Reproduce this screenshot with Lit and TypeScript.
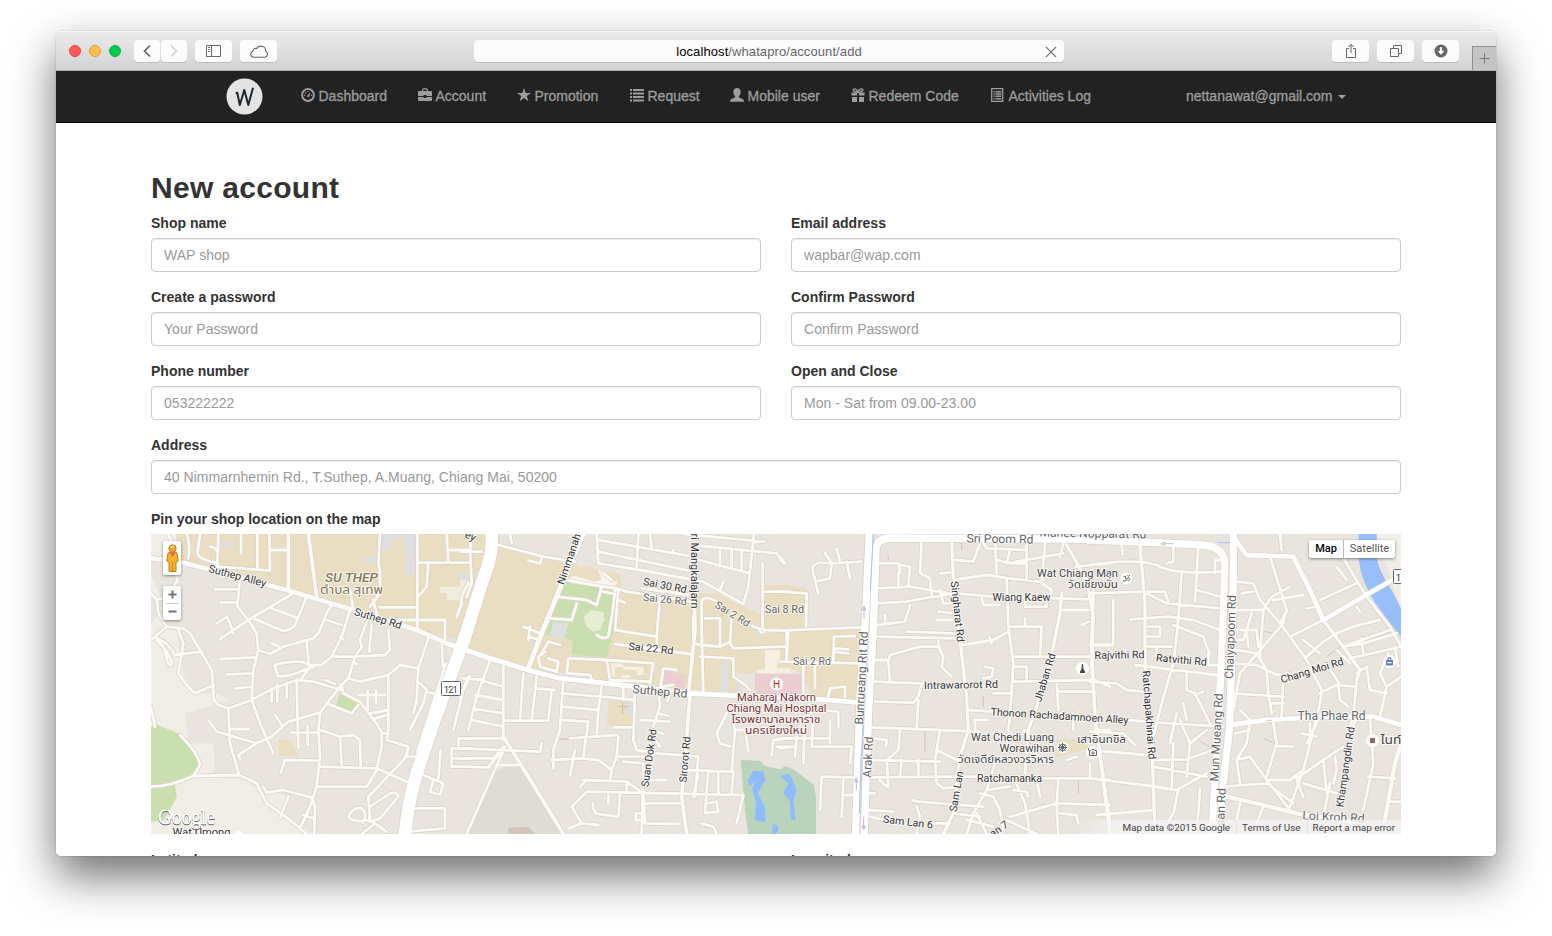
import { LitElement, html, svg, css } from "lit";
import { customElement } from "lit/decorators.js";

type Road = { d: string; w: number };
type Tile = { x: number; roads: Road[] };

// Street geometry, in thirds of a pixel, one sheet per quarter of the map.
const TILES: Tile[] = [
  {
    x: 140,
    roads: [
      {
        w: 8.5,
        d: `M85 12 L105 75 112 150 75 220 M140 12 C150 40 150 60 145 85 M180 12 L172 70 Q180 90 235 100 L225 110 M235 12 L232 100 M210 50 Q220 50 235 65 M303 12 V70
M352 12 V118 M235 110 L390 122 388 12 M390 60 H440 M445 12 V180 M720 12 L715 100 720 120 V190 L690 230 M630 180 L640 240 M832 12 V300 M832 98 H985 M920 12 L925 90 M925 60 H990 M865 100 L860 170 835 200
M720 232 H830 M720 270 H915 V335 M985 160 Q960 200 965 220 L950 262 M300 140 L292 230 325 270 350 310 355 360 340 420 335 510 M225 178 H290 M240 217 H290 M230 280 L262 260 280 310 M325 270 L240 327
M325 270 L460 190 M340 265 L430 303 Q455 300 465 285 L500 200 M395 235 L475 265 M355 360 L390 372 430 350 520 325 535 310 560 250 575 225 M395 340 L420 352 M560 270 L605 285 M630 240 L605 320 575 380 M600 320 L610 328
M500 335 L507 410 M240 387 L350 382 M260 433 L340 430 M285 475 L335 470 M515 405 L545 405 575 380 645 380 735 375 750 360 745 300 M680 275 L660 330 665 350 645 380 625 445 605 465 M695 280 L688 365 M700 210 L712 260
M485 395 Q430 395 403 406 L415 440 455 435 520 410 485 395 M485 445 L515 405 M335 510 L400 475 470 450 520 455 605 480 M555 450 L585 462 M625 445 L660 455 745 435 780 405 835 415 865 325 M640 395 L650 402
M745 435 V600 L740 630 805 650 800 680 840 680 M605 465 L610 490 660 515 712 585 725 605 725 650 710 720 M605 465 L560 520 540 550 535 600 540 680 530 770 510 830 M560 520 L635 550 655 525
M655 495 H735 M683 480 V540 M708 480 V520 M690 550 L745 540 M705 565 L740 555 M725 610 H745 M835 415 L830 510 820 550 M840 460 L860 480 850 520 810 600 M865 487 L880 490 M905 330 L908 410 M832 665 L885 500 918 400
M395 480 V515 M412 465 V515 M440 460 V505 M470 455 L475 655 M455 608 H535 M503 588 V645 M235 525 L265 535 335 510 M265 535 L270 640 297 735 M270 597 H325 M205 570 L230 605 350 640 395 620 445 575 540 548
M350 640 L295 675 300 688 M335 510 L360 580 400 670 M405 555 L425 585 M80 290 L130 295 150 310 215 420 222 510 235 525 M50 205 L55 250 80 290 33 330 M33 190 L50 208 70 205 M115 300 L130 340 115 430 Q150 480 165 490 L222 465
M50 330 Q90 370 97 402 Q85 420 75 360 Q65 335 50 330 M50 325 Q85 335 105 375 L185 365 M33 770 Q90 770 160 738 L297 735 350 760 380 820 450 870 500 912 M120 615 Q175 670 180 705 L160 738 M33 530 L45 590
M370 770 L380 788 430 780 515 803 525 830 522 912 M445 800 L420 865 M510 830 L480 895 M490 855 L520 865 M422 728 L435 690 530 692 M540 710 L710 715 800 755 M535 770 H680 L710 720 M540 600 L600 620 605 705 M595 620 L640 615 660 630 662 710
M805 650 L795 685 685 800 690 870 740 905 M690 830 L750 790 Q775 785 775 800 L720 865 690 875 M690 870 Q640 880 625 860 Q640 830 665 835 Q685 850 668 878 M665 912 L700 885 M990 440 L970 480 940 600 M902 660 L895 745 M850 735 L910 760 900 795 870 785 880 750
M815 835 H915 V895 L800 905 M990 625 H955 V650 M990 655 H935 V710 H990 M935 685 H990`,
      },
      { w: 11, d: `M505 12 L530 200 M445 12 V180` },
      { w: 14, d: `M33 85 L120 95 440 180 640 240 830 300 920 340` },
    ],
  },
  {
    x: 460,
    roads: [
      {
        w: 8.5,
        d: `M150 12 L155 40 M115 45 L250 80 345 95 M205 92 L240 100 245 85 M0 65 H65 M35 12 L30 60 35 160 20 200 M410 12 L415 100 540 120 730 155 850 222 865 170 882 12 M415 30 L700 80 M415 65 L700 125 M535 12 L530 115 M570 12 L575 55
M640 60 V70 M670 12 L915 35 M700 45 L950 70 970 100 M700 85 L870 130 M780 55 V110 M815 55 V115 M845 60 V120 M790 155 L780 180 M320 150 L400 165 470 175 500 185 695 215 M545 175 L690 195
M430 130 L455 150 M425 170 L410 225 380 210 290 200 M350 220 L335 270 275 265 M430 185 L455 190 M465 180 Q460 250 445 320 Q430 330 410 315 M475 180 L465 300 590 320 600 200 M475 210 L495 218 M590 320 V350 M465 342 L690 372
M190 290 L240 310 M205 320 L240 330 M210 290 L205 330 M245 370 L265 335 300 345 M265 385 L295 395 290 425 240 410 235 380 255 365 M320 430 L325 385 440 390 580 400 570 460 M440 390 L450 450 570 455 M325 430 L390 435 395 450
M600 480 L610 415 650 420 M610 470 L640 465 M595 480 L600 530 580 590 M540 570 L630 575 M595 550 L625 558 M630 490 L622 515 M730 490 L725 300 725 210 Q740 195 770 215 M735 265 H780 V350 M700 340 L725 345 780 350 810 335 M720 380 L820 385 V440
M815 250 L810 340 820 355 975 350 M908 100 V300 M915 185 H990 M870 285 L905 300 990 302 M980 310 V390 M820 440 L850 460 870 480 M10 445 L70 450 M130 410 V630 M90 390 L50 500 25 600 M25 440 L0 500 M60 450 L130 470 M45 495 L130 510
M40 535 L130 550 M35 570 L130 590 M190 430 L180 570 M130 572 H265 L275 480 M230 440 L215 570 M225 475 L285 480 M0 625 H130 M0 655 L240 665 245 640 M0 685 H100 L130 650 M0 710 L85 712 130 655
M135 650 L20 912 M115 705 H185 M310 450 L300 600 280 660 280 715 M275 690 L360 685 415 690 455 720 470 680 475 620 M305 490 L425 500 M305 530 L415 540 M300 570 L385 575 M425 470 L415 540 410 620 M385 575 L370 680
M345 660 L330 735 M330 625 L470 615 M430 500 L525 510 M490 470 V510 M525 480 L520 630 530 660 590 670 715 680 705 800 M455 720 L450 755 M470 680 L560 680 M490 695 L550 700 M460 592 H515 M370 750 L500 755 550 790
M500 755 V785 M380 785 L850 795 830 880 M380 785 L335 830 365 880 325 895 M365 880 L415 885 M360 770 L380 750 M550 700 L545 912 M550 780 L555 880 660 882 M400 820 Q395 850 420 853 L475 860 480 795 M445 795 V820
M527 850 H550 V870 H527 Z M550 820 H660 M580 620 L600 650 M575 600 L610 612 M560 750 H620 M680 720 L815 725 825 600 820 580 M715 735 L700 800 M745 725 L740 780 M775 730 V790 M740 780 L735 850 775 845 770 815 740 820
M820 725 L815 790 M725 880 L760 890 770 912 M800 550 L770 610 780 640 810 650 M830 600 H855 L865 665 M990 625 L940 630 935 675 M950 650 H990 M700 260 V330`,
      },
      { w: 11, d: `M130 620 L205 740 310 912 M700 80 L705 300 685 495 690 500 665 800 680 912` },
      { w: 15, d: `M370 12 L310 150 245 310 205 415` },
    ],
  },
  {
    x: 780,
    roads: [
      {
        w: 8.5,
        d: `M0 80 L15 100 M135 70 L155 100 245 95 M155 100 L115 98 97 110 100 130 115 190 M105 155 L150 145 155 100 M170 55 L180 95 M200 95 L210 145 M0 185 L80 190 78 290 M0 302 L240 292 M25 305 L20 385 M0 395 L240 400 M160 395 L162 320 225 318
M165 355 L205 358 M160 365 L205 370 M105 400 V475 M70 390 V490 M145 500 L150 475 195 470 195 500 M120 540 L175 545 175 590 M0 625 H145 M150 570 V640 M50 620 L45 680 M75 560 L70 700 M100 560 L95 650 H215 L210 700 M0 655 L45 650
M120 840 L125 740 225 742 M190 745 L185 860 M190 795 H225 M290 100 L355 100 360 130 M355 130 V175 M290 175 L390 170 505 190 M290 220 L380 215 430 205 530 190 640 200 840 205 930 208 M425 30 L420 130 450 145 455 200 M360 105 L390 110 385 165
M315 255 V280 M290 285 L375 275 390 225 M380 305 L520 310 M290 320 L530 325 M475 325 L475 350 490 380 485 410 515 440 M325 395 L330 375 420 350 480 350 M290 390 L325 390 330 455 M285 455 L420 460 565 470 M550 345 L640 330 685 305 M628 320 L635 340
M520 150 L620 135 685 145 780 155 815 180 810 205 M645 35 L650 130 M600 40 L580 95 525 90 M680 100 L850 70 M740 40 V150 M795 40 L785 155 M850 40 L840 80 M610 40 L620 55 735 60 M690 60 L680 100 M650 90 L690 100 740 100 M680 150 L685 290 700 400 690 560 680 640
M690 290 L785 290 780 380 M735 265 V290 M700 380 H990 M700 410 H740 V450 M700 455 L940 450 M850 240 H925 M940 345 H990 M905 285 L925 275 M885 110 L990 100 M480 130 L510 128 M480 180 L490 220 530 220 M475 245 L530 250 M470 270 L520 270
M605 205 L610 225 660 225 M735 210 V230 H800 V210 M565 540 L640 545 M580 570 L625 570 M585 570 V600 M285 515 L400 518 415 500 425 465 M415 510 L410 600 M275 592 L480 600 600 605 M285 625 L320 630 318 650 M360 600 L355 660 320 690 325 770
M270 690 L480 695 M480 600 L465 690 M365 690 L360 740 M415 690 V740 M270 742 L500 740 H590 M590 740 L800 745 930 745 990 750 M300 750 L320 770 M465 690 L470 760 490 775 540 770 M470 660 L530 690 M640 490 H695 M615 410 L640 415 635 440 610 445
M830 450 L835 540 M835 485 H940 M880 550 V600 M645 700 L620 780 580 850 560 912 M700 740 L735 820 750 912 M600 790 L640 800 660 840 670 900 M620 780 L690 770 M700 780 L740 785 745 800 M520 850 L600 860 M395 810 L415 815 610 830 M410 830 L420 860 410 912
M460 880 H510 M265 840 L340 845 M270 860 L310 870 M270 790 H285 M835 750 L830 830 835 912 M690 860 L830 820 990 825 M770 750 L780 800 M840 850 L890 855 895 880 M930 700 V740 M860 690 L890 680 M945 450 L990 470 M945 600 H990 M735 600 L700 640
M560 870 L640 890 M590 850 L620 912 M680 870 L770 912`,
      },
      {
        w: 10,
        d: `M515 30 L520 150 540 330 560 500 565 600 540 680 520 850 490 912 M845 190 L840 250 820 350 810 400 780 500 745 600 735 730 M860 45 L920 150 940 260 935 400 945 560 970 740 990 880`,
      },
    ],
  },
  {
    x: 1090,
    roads: [
      {
        w: 8.5,
        d: `M95 45 L98 75 M0 105 Q130 85 200 105 Q250 135 390 125 M250 45 L250 95 230 100 M325 50 L315 215 M0 190 L160 185 230 220 395 235 M120 268 L235 260 310 270 390 300 M165 185 L225 185 235 215 M275 130 L262 300 250 400 215 520
M250 285 L340 320 350 350 360 370 M70 210 V345 M0 345 H70 M175 290 H210 V320 H175 M175 350 H245 M200 350 V380 M135 405 L380 435 M290 430 L290 480 315 490 360 580 M325 490 L340 485 M0 455 L80 460 110 480 160 485 M280 520 L290 570 M260 550 L240 640
M110 570 L240 580 400 590 M0 605 L100 610 135 645 M0 660 L170 675 M190 690 L290 688 370 660 M190 710 L350 740 M0 745 L160 765 260 780 350 730 M300 640 L290 740 M265 780 L250 850 220 900 M250 640 L245 780 M195 840 L20 855 M330 775 L320 912
M375 90 H395 M375 90 V130 M320 180 L390 200 M215 520 L190 620 M355 370 V405 H380 M270 570 L300 640 350 600
M440 155 L490 160 510 210 570 280 600 320 650 390 695 480 690 520 640 720 600 830 M440 240 L520 240 510 380 M485 250 L460 330 440 330 M440 300 L500 300 505 350 M470 310 L475 350 M520 240 L545 200 600 170 M580 280 L450 430 430 540 M455 190 L490 185
M570 12 L575 60 M540 80 L590 240 575 290 M550 210 L640 195 M690 210 L800 160 M760 85 L830 200 900 290 933 350 M650 235 L680 230 M600 320 L700 270 M800 230 L810 245 M770 150 L740 110 M430 400 L500 405 560 435 600 430 M440 360 L500 370 530 420 535 490 545 550
M425 490 L580 500 M580 440 L575 560 M540 520 H580 M640 330 L690 370 M650 380 L700 335 740 310 790 290 870 270 M740 360 L780 400 M760 350 L820 340 920 310 M815 325 L820 370 M760 350 L900 300 M780 385 L933 350 M800 430 L830 410 840 480 890 490
M800 450 L790 560 780 590 M745 470 L750 510 775 530 M690 490 L740 465 800 470 M895 370 L870 430 890 470 870 560 M933 440 L890 470 M915 350 L925 410 M710 400 L750 465 M450 540 L480 570 470 640 440 690 450 760 M435 610 L480 600
M440 690 L480 680 530 750 600 750 640 720 M400 770 L530 760 610 820 M530 750 L600 840 M550 580 L560 640 530 740 M560 648 L610 650 M635 610 L680 620 M660 580 V640 M620 745 L700 690 760 650 M700 690 L710 790 M640 760 L740 790 M735 680 L740 720 730 760
M620 750 L640 800 M840 570 L850 700 820 840 M835 740 L915 745 M780 620 L800 560 M900 815 H933 M590 240 L570 280 M650 640 L690 560 M720 760 L700 860 M450 820 L440 870 M520 830 L500 880`,
      },
      { w: 10, d: `M150 50 L165 220 165 390 185 620 195 912 M10 180 L5 350 15 560 40 760 60 912 M700 270 L760 350 810 420 800 450` },
      { w: 13, d: `M430 20 L470 75 610 80 660 180 700 270 820 200 933 135 M420 585 L530 570 700 560 850 560 933 585 M410 800 L520 825 620 850 700 862 820 880 M933 640 L915 700 885 870` },
    ],
  },
];

type Lbl = { t: string; x: number; y: number; w: number; r?: number; s?: number; c?: string; b?: string };
const DK = "#333";
const MID = "#666";
const WINE = "#7d3233";
// x, y: centre of the label; w: its set width; r: rotation in degrees
const LABELS: Lbl[] = [
  { t: "Suthep Alley", x: 237.5, y: 576, w: 59, r: 15 },
  { t: "Suthep Rd", x: 378, y: 618.5, w: 49, r: 17 },
  { t: "SU THEP", x: 351.5, y: 578, w: 53, s: 12, c: "#85775a", b: "it" },
  { t: "ตำบล สุเทพ", x: 351.5, y: 590, w: 63, s: 11.5, c: "#85775a" },
  { t: "Wat Umong", x: 201.5, y: 832.5, w: 58, s: 11 },
  { t: "ey", x: 470.5, y: 536, w: 11, r: 25 },
  { t: "Nimmanah", x: 569, y: 559, w: 53, r: -71 },
  { t: "ri Mangkalajarn", x: 694, y: 571, w: 75, r: 90 },
  { t: "Sai 30 Rd", x: 665, y: 585.5, w: 44, r: 11 },
  { t: "Sai 26 Rd", x: 665, y: 599.5, w: 44, r: 6, c: MID },
  { t: "Sai 22 Rd", x: 651, y: 648.5, w: 45, r: 6 },
  { t: "Sai 2 Rd", x: 732.5, y: 614, w: 39, r: 32, c: MID },
  { t: "Sai 8 Rd", x: 784.5, y: 609, w: 39, c: MID },
  { t: "Sai 2 Rd", x: 812, y: 661.5, w: 38, c: MID },
  { t: "Suthep Rd", x: 660, y: 691.5, w: 55, r: 5, s: 12, c: MID },
  { t: "Suan Dok Rd", x: 649, y: 758, w: 58, r: -82 },
  { t: "Sirorot Rd", x: 685, y: 759.5, w: 46, r: -85 },
  { t: "Maharaj Nakorn", x: 776.5, y: 697, w: 79, s: 11, c: WINE },
  { t: "Chiang Mai Hospital", x: 776.5, y: 708, w: 100, s: 11, c: WINE },
  { t: "โรงพยาบาลมหาราช", x: 776, y: 719, w: 89, s: 11, c: WINE },
  { t: "นครเชียงใหม่", x: 776, y: 730, w: 62, s: 11, c: WINE },
  { t: "Bunrueang Rit Rd", x: 861.5, y: 678, w: 93, r: -87, s: 12, c: MID },
  { t: "Arak Rd", x: 868, y: 757, w: 41, r: -87, s: 12, c: MID },
  { t: "Sri Poom Rd", x: 1000, y: 539, w: 67, r: 1, s: 12, c: MID },
  { t: "Manee Nopparat Rd", x: 1093, y: 533.5, w: 107, r: 1, s: 12, c: MID },
  { t: "Singharat Rd", x: 957.5, y: 611.5, w: 61, r: 84 },
  { t: "Wat Chiang Man", x: 1077.5, y: 573.5, w: 81, s: 11, c: "#444" },
  { t: "วัดเชียงมั่น", x: 1093, y: 584, w: 50, s: 11, c: "#444" },
  { t: "Wiang Kaew", x: 1021.5, y: 597.5, w: 58 },
  { t: "Jhaban Rd", x: 1045, y: 677.5, w: 50, r: -73 },
  { t: "Intrawarorot Rd", x: 961, y: 685, w: 74, r: -1 },
  { t: "Thonon Rachadamnoen Alley", x: 1059.5, y: 716, w: 138, r: 3.5 },
  { t: "Wat Chedi Luang", x: 1012.5, y: 737, w: 83, s: 11, c: "#444" },
  { t: "Worawihan", x: 1027, y: 748, w: 55, s: 11, c: "#444" },
  { t: "วัดเจดีย์หลวงวรวิหาร", x: 1006, y: 759, w: 96, s: 11, c: "#444" },
  { t: "เสาอินทขิล", x: 1101.5, y: 739, w: 49, s: 11, c: "#444" },
  { t: "Ratchamanka", x: 1009.5, y: 778, w: 65 },
  { t: "Sam Lan", x: 956.5, y: 791.5, w: 41, r: -80 },
  { t: "Sam Lan 6", x: 908, y: 822, w: 50, r: 7 },
  { t: "an 7", x: 999, y: 829, w: 20, r: -35 },
  { t: "Rajvithi Rd", x: 1119.5, y: 655, w: 50, r: -1 },
  { t: "Ratvithi Rd", x: 1181.5, y: 660, w: 51, r: 5 },
  { t: "Ratchapakhinai Rd", x: 1149, y: 715, w: 89, r: 86 },
  { t: "Chaiyapoom Rd", x: 1230.5, y: 637, w: 84, r: -88, s: 12, c: MID },
  { t: "Mun Mueang Rd", x: 1216.5, y: 737.5, w: 88, r: -87, s: 12, c: MID },
  { t: "san Rd", x: 1221, y: 807, w: 38, r: -88, s: 12, c: MID },
  { t: "Chang Moi Rd", x: 1312, y: 670.5, w: 65, r: -17 },
  { t: "Tha Phae Rd", x: 1331.5, y: 716, w: 68, s: 12, c: MID },
  { t: "Khampangdin Rd", x: 1345.5, y: 767, w: 81, r: -82 },
  { t: "Loi Kroh Rd", x: 1333.5, y: 817, w: 62, r: 3, s: 12, c: MID },
  { t: "ไนท์", x: 1391, y: 739.5, w: 21, s: 12, c: "#444" },
];

@customElement("site-map")
export class SiteMap extends LitElement {
  static styles = css`
    :host { display: block; height: 300px; position: relative; overflow: hidden; font-family: Roboto, sans-serif; }
    .canvas { display: block; width: 1250px; height: 300px; }
    .case { fill: none; stroke: #d9d2c6; stroke-linejoin: round; stroke-linecap: round; }
    .road { fill: none; stroke: #fbfaf6; stroke-linejoin: round; stroke-linecap: round; }
    .main { fill: none; stroke: #fff; stroke-linejoin: round; }
    .lbl { text-anchor: middle; dominant-baseline: central; paint-order: stroke; stroke: rgba(255, 255, 255, .75); stroke-width: 2px; stroke-linejoin: round; font-family: Roboto, "Noto Sans Thai", "Loma", sans-serif; }
    .it { font-style: italic; font-weight: 500; }
    .logo { font-family: "Liberation Serif", serif; font-size: 20px; fill: #fff; stroke: #fff; stroke-width: .4px; filter: drop-shadow(.5px 1px .6px rgba(0, 0, 0, .6)); }
    .ctl { position: absolute; box-sizing: border-box; background: #fff; border-radius: 2px; box-shadow: 0 1px 3px rgba(0, 0, 0, .45); }
    .man { left: 12px; top: 7px; width: 18px; height: 34px; padding-left: .500px; }
    .zoom { left: 12px; top: 52px; width: 18px; height: 34px; padding-left: .500px; }
    .types { right: 6px; top: 6px; height: 18px; display: flex; font-size: 11px; line-height: 18px; color: #565656; }
    .on { font-weight: 500; color: #000; border-right: 1px solid #bbb; width: 34px; text-align: center; }
    .sat { width: 51px; text-align: center; }
    .legal { position: absolute; right: 0; bottom: 0; height: 14px; display: flex; font-size: 9.900px; line-height: 15px; color: #444; background: linear-gradient(90deg, rgba(245, 245, 245, 0), rgba(245, 245, 245, .75) 40px); padding-left: 40px; }
    .legal span { padding: 0 6px; white-space: nowrap; }
    .legal span + span { border-left: 1px solid rgba(220, 220, 220, .7); padding-left: 5px; }
  `;

  render() {
    const at = (x: number) => `translate(${x} 530) scale(.33333)`;
    const trunk121 = "M1055 -10 L1055 50 Q1052 90 1030 145 L975 320 880 580 830 730 Q800 830 794 930";
    const suthep = "M920 340 L1050 385 1180 425 1260 445 1490 470 1640 490 1800 497";
    return html`
      <svg class="canvas" viewBox="151 534 1250 300">
        <rect x="151" y="534" width="1250" height="300" fill="#e9e5de" />
        <g transform=${at(140)}>
          <path fill="#f0eee7" d="M33 12H110L100 85 33 85ZM33 130L60 200 33 190ZM33 280L50 260 110 300 130 430 165 490 225 490 270 510 135 550 145 640 220 640 225 725 160 740 320 745 360 800 440 860 520 912H33Z" />
          <path fill="#f0eee7" d="M340 765L445 800 420 865 370 820Z" />
          <path fill="#e9dec1" d="M110 12H1060L1050 100 960 330 830 300 640 240 440 180 120 95Z" />
          <path fill="#e9dec1" d="M415 628L455 632 475 682 415 675Z" />
          <path fill="#c9dfaf" d="M33 590L48 583 120 612 172 680 178 718 100 765 33 765ZM33 770L105 765 110 800 90 840 70 872 33 876ZM600 492L655 522 632 553 585 530Z" />
          <path fill="#dfdfdf" d="M722 12H780V30L755 35V62H725ZM797 65H825V134H797ZM780 12H832V65H797L780 60ZM675 82H710V100H675ZM243 35H280V52H243ZM955 130H985V150H955Z" />
          <path fill="#e9dec1" d="M752 38L785 18 797 60 790 100 745 100Z" />
          <path fill="#f0edde" d="M900 170H960V150H990V190L965 210H920V190H900Z" />
        </g>
        <g transform=${at(460)}>
          <path fill="#e9dec1" d="M110 50L270 90 480 130 490 185 700 200 720 190 770 190 990 300V430H820L840 490 510 465 200 410 20 350 90 130ZM915 165H990V300L905 295ZM445 512H520V585H440Z" />
          <path fill="#e9e5de" d="M485 125H545V180H485Z" />
          <path fill="#c9dfaf" d="M310 152L475 185 462 300 440 382 335 375 338 330 257 315 290 200Z" />
          <path fill="#e6eed2" d="M370 262L392 240 430 245 433 270 420 300 400 305 380 290Z" />
          <path fill="#dfdfdf" d="M280 275L325 280 312 328 270 318ZM783 393H805V485H783ZM500 515H518V557H500ZM195 335H225L220 350ZM890 300H910V325L890 320ZM600 240H620V250H600ZM828 458H845V490H828Z" />
          <path fill="#f5f0e2" d="M455 400H490V412H465V440H455ZM490 410H550V435H530V420H490ZM485 435H510V445H485ZM915 360H970V400H950V415H990V430H890V418H915Z" />
          <path fill="#f9f6ee" d="M325 145L345 137 400 155 425 150 415 120 440 125 445 150 475 155 460 172 330 160Z" />
          <path fill="#ebcdd2" d="M612 418L675 435 672 480 610 462ZM885 432H1025V492L885 490Z" />
          <path fill="#dfdbd5" d="M25 912L105 735Q140 690 178 712L305 912Z" />
          <path fill="#d2c6bc" d="M145 893L205 890 225 912H145Z" />
          <path fill="#bad3bd" d="M842 690L900 692 915 708 960 718 975 708 1000 718 1062 765 1068 800V912H865L855 840Z" />
          <path fill="#8fbcff" d="M863 752L880 722 910 724 917 750 893 790 915 830 917 877 885 870 888 820 876 775 890 752 870 768ZM938 880L957 892 948 912H936ZM958 738L990 732 1010 780 1000 812 1007 870 992 868 990 815 970 790 985 760Z" />
          <path stroke="#c9bfb0" fill="none" stroke-width="3" d="M488 515V552M475 530H505M300 627H340" />
        </g>
        <g transform=${at(780)}>
          <path fill="#e9dec1" d="M0 165L80 175V295L240 300 225 510H100L65 430 0 400ZM830 628H885L925 650V655L825 685Z" />
          <path fill="#ebcdd2" d="M-75 432H65V492H-75Z" />
          <path stroke="#cdc6ba" fill="none" stroke-width="3" d="M435 605V665M545 35V60M610 500V530M895 750V790M325 75V90" />
        </g>
        <g transform=${at(1090)}>
          <path fill="#f0eee7" d="M860 12H933V240Z" />
          <path fill="#98bffa" d="M806 12H860L862 90Q870 130 905 180L933 235V322L860 225Q815 160 806 90Z" />
          <path fill="#e9dec1" d="M428 495L442 492 440 515 425 508Z" />
          <path stroke="#cdc6ba" fill="none" stroke-width="3" d="M330 635L370 655M520 625L555 640M710 380L760 345M490 300L545 308" />
        </g>
        ${TILES.map((t) => svg`<g transform=${at(t.x)}>${t.roads.map((r) => svg`<path class="case" stroke-width=${r.w + 4} d=${r.d} />`)}</g>`)}
        <g transform=${at(140)}>
          <path class="case" stroke-width="42" d=${trunk121} />
          <path class="case" stroke-width="19" d=${suthep} />
        </g>
        <g transform=${at(780)}>
          <path class="case" stroke-width="27" d="M268 0L257 250 240 500 226 930M990 28L330 24Q290 25 288 60L280 300 265 560 252 930" />
          <path class="case" stroke-width="18" d="M-120 497L80 505 240 518" />
        </g>
        <g transform=${at(1090)}>
          <path class="case" stroke-width="26" d="M-10 30L200 38 340 45Q400 50 405 100L400 250 390 480 380 650 365 930M430 0V130L425 400 418 600 395 800 390 930" />
        </g>
        ${TILES.map((t) => svg`<g transform=${at(t.x)}>${t.roads.map((r) => svg`<path class="road" stroke-width=${r.w} d=${r.d} />`)}</g>`)}
        <g transform=${at(140)}>
          <path class="main" stroke-width="38" d=${trunk121} />
          <path class="main" stroke-width="15" d=${suthep} />
        </g>
        <g transform=${at(780)}>
          <path class="main" stroke-width="22" d="M268 0L257 250 240 500 226 930M990 28L330 24Q290 25 288 60L280 300 265 560 252 930" />
          <path class="main" stroke-width="14" d="M-120 497L80 505 240 518" />
          <path fill="none" stroke="#a9c9fb" stroke-width="3.5" d="M280 12L271 180M254 510L243 700 238 850M865 18H915" />
          <path fill="none" stroke="#b9b9cf" stroke-width="3" d="M252 265V235M247 240L252 228 257 240ZM229 780V750M224 755L229 743 234 755ZM251 860V895M246 888L251 900 256 888Z" />
        </g>
        <g transform=${at(1090)}>
          <path class="main" stroke-width="22" d="M-10 30L200 38 340 45Q400 50 405 100L400 250 390 480 380 650 365 930M430 0V130L425 400 418 600 395 800 390 930" />
          <path class="main" stroke-width="13" d="M430 20L470 75 610 80 660 180 700 270 820 200 933 135M420 585L530 570 700 560 850 560 933 585" />
          <path fill="none" stroke="#a9c9fb" stroke-width="3.5" d="M385 38H420" />
          <path fill="none" stroke="#c9c5be" stroke-width="3" d="M250 41H220M224 36L212 41 224 46ZM545 571H530" />
        </g>
        <circle cx="762" cy="630.500" r="2.300" fill="#e9e5de" stroke="#fbfaf6" stroke-width="1.600" />

        <g fill="#fff" stroke="#666" stroke-width="1">
          <rect x="441.500" y="681.500" width="19" height="14" rx="1" />
          <rect x="1393.500" y="569.500" width="19" height="14" rx="1" />
        </g>
        <g fill="#fff">
          <circle cx="776.500" cy="684" r="6.500" /><circle cx="1126.500" cy="578.500" r="6" /><circle cx="1082.500" cy="668.500" r="6.500" />
          <circle cx="1062.500" cy="747.500" r="6" /><circle cx="1092.500" cy="752.500" r="6.500" /><circle cx="1389.500" cy="661.500" r="6.500" />
          <circle cx="1372.500" cy="740.500" r="6.500" /><circle cx="239" cy="836" r="5" />
        </g>
        <rect x="1370" y="738" width="5" height="5" fill="#8d6b64" />
        <g fill="none" stroke="#666" stroke-width="1">
          <circle cx="1062.500" cy="747.500" r="3.200" /><path d="M1058 747.500H1067M1062.500 743V752M1059.300 744.300L1065.700 750.700M1065.700 744.300L1059.300 750.700" />
          <path d="M1123.500 576.500Q1126.500 575.500 1125.500 578Q1128 580.500 1125 581.200L1123 580.500M1126.500 579Q1130 576.500 1129.800 579.500Q1129 581.500 1127.500 580.500M1127 575.500Q1128.500 577 1130 575.300" />
          <path d="M1089.500 750.500H1091L1092 749.500H1094L1095 750.500H1096.500V755.500H1089.500ZM1088.500 748V750.500" /><circle cx="1093" cy="753" r="1.200" />
        </g>
        <path fill="#444" d="M1082 664H1083L1083.600 669.500 1085 671.500V673H1080V671.500L1081.400 669.500Z" />
        <path fill="#6483bd" fill-rule="evenodd" d="M1386 660H1387.500Q1387.500 657 1389.500 657Q1391.500 657 1391.500 660H1393V665.500H1386ZM1388.600 660H1390.400Q1390.300 658.300 1389.500 658.300Q1388.700 658.300 1388.600 660ZM1387.500 662V663.200H1391.500V662Z" />
        <text class="lbl" x="776.500" y="684.300" font-size="10" fill="#e01f1f">H</text>
        <text class="lbl" x="450.800" y="689" font-size="9.500" fill="#333" textLength="14">121</text>
        <text class="lbl" x="1398.500" y="577" font-size="9.500" fill="#333">1</text>

        ${LABELS.map(
          (l) => svg`<text class="lbl ${l.b ?? ""}" fill=${l.c ?? DK} font-size=${l.s ?? 10.5} textLength=${l.w} lengthAdjust="spacingAndGlyphs" transform="translate(${l.x} ${l.y}) rotate(${l.r ?? 0})">${l.t}</text>`,
        )}
        <text class="logo" x="158" y="824" textLength="57" lengthAdjust="spacingAndGlyphs">Google</text>
      </svg>
      <div class="ctl man">
        <svg width="17" height="34" viewBox="0 0 17 34">
          <path fill="#f5b22d" stroke="#b9740e" stroke-width=".9" d="M4 12Q8.500 9.500 13 12L14.200 20 12 21V30.500H5V21L2.800 20Z" />
          <path stroke="#b9740e" stroke-width=".7" d="M8.500 21V30" />
          <path fill="#ee5b4b" d="M5.500 11.500H11.500L8.500 15.500Z" />
          <circle cx="8.500" cy="7.500" r="3.700" fill="#f0a22c" stroke="#b9740e" stroke-width=".8" />
          <ellipse cx="8" cy="6" rx="2" ry="1" fill="#fbdc97" />
        </svg>
      </div>
      <div class="ctl zoom">
        <svg width="17" height="34" viewBox="0 0 17 34">
          <path fill="none" stroke="#737373" stroke-width="2" d="M4.500 8.500H12.500M8.500 4.500V12.500M4.500 25.500H12.500" />
          <path stroke="#ccc" d="M2 17.500H15" />
        </svg>
      </div>
      <div class="ctl types"><div class="on">Map</div><div class="sat">Satellite</div></div>
      <div class="legal"><span>Map data ©2015 Google</span><span>Terms of Use</span><span>Report a map error</span></div>
    `;
  }
}

const ICONS: Record<string, unknown> = {
  dash: svg`<circle cx="7" cy="7" r="5.900" fill="none" stroke="currentColor" stroke-width="2"/><path fill="currentColor" d="M6 7.800L9.600 4.200 8.200 8.600A1.200 1.200 0 0 1 6 7.800ZM3 6.600h1.200v1.200H3zM4 4.300h1.200v1.200H4zM6.300 3h1.200v1.200H6.300zM9.900 6.600h1.200v1.200H9.900z"/>`,
  brief: svg`<path fill="currentColor" fill-rule="evenodd" d="M4 2Q4 .2 5.500 .2h3Q10 .2 10 2V3h3q1 0 1 1v4H8.500V7h-3v1H0V4q0-1 1-1h3ZM5.200 3h3.600V1.400H5.200ZM0 9h5.500v1h3V9H14V12q0 1-1 1H1q-1 0-1-1Z"/>`,
  star: svg`<path fill="currentColor" d="M7 0L8.700 5H14L9.800 8.100 11.400 13.200 7 10.100 2.600 13.200 4.200 8.100 0 5H5.300Z"/>`,
  list: svg`<path fill="currentColor" d="M0 1h2v2H0zM3 1h11v2H3zM0 4.500h2v2H0zM3 4.500h11v2H3zM0 8h2v2H0zM3 8h11v2H3zM0 11.500h2v2H0zM3 11.500h11v2H3z"/>`,
  user: svg`<path fill="currentColor" d="M7 0C9 0 10.700 1.500 10.700 3.900 10.700 5.500 9.700 7.200 8.900 8.200V9.200L13 11.200Q14 11.800 14 13.700H0Q0 11.800 1 11.200L5.100 9.200V8.200C4.300 7.200 3.300 5.500 3.300 3.900 3.300 1.500 5 0 7 0Z"/>`,
  gift: svg`<path fill="currentColor" fill-rule="evenodd" d="M.5 4.500H6V7.500H.5ZM8 4.500h5.500v3H8ZM1 9h5v5H1ZM8 9h5v5H8Z"/><path fill="none" stroke="currentColor" stroke-width="1.400" d="M7 4.300C5.800 1 3.500 .3 2.500 1.300 1.500 2.500 3 4 7 4.300 11 4 12.500 2.500 11.500 1.300 10.500 .3 8.200 1 7 4.300Z"/>`,
  log: svg`<path fill="none" stroke="currentColor" stroke-width="1.300" d="M.7 .7h11v12.600h-11z"/><path fill="currentColor" d="M2.500 3h1.200v1.500H2.500zM4.500 3h5.800v1.500H4.500zM2.500 5.300h1.200v1.500H2.500zM4.500 5.300h5.800v1.500H4.500zM2.500 7.600h1.200v1.500H2.500zM4.500 7.600h5.800v1.500H4.500zM2.500 9.900h1.200v1.500H2.500zM4.500 9.900h5.800v1.500H4.500z"/>`,
};

const NAV: [string, string][] = [
  ["dash", "Dashboard"],
  ["brief", "Account"],
  ["star", "Promotion"],
  ["list", "Request"],
  ["user", "Mobile user"],
  ["gift", "Redeem Code"],
  ["log", "Activities Log"],
];

const FIELDS: [string, string, boolean?][] = [
  ["Shop name", "WAP shop"],
  ["Email address", "wapbar@wap.com"],
  ["Create a password", "Your Password"],
  ["Confirm Password", "Confirm Password"],
  ["Phone number", "053222222"],
  ["Open and Close", "Mon - Sat from 09.00-23.00"],
  ["Address", "40 Nimmarnhemin Rd., T.Suthep, A.Muang, Chiang Mai, 50200", true],
];

@customElement("app-root")
export class AppRoot extends LitElement {
  static styles = css`
    :host { display: block; box-sizing: border-box; width: 1552px; height: 936px; padding: 31px 56px 0; background: #fff; overflow: hidden; font-family: "Liberation Sans", Arial, sans-serif; font-size: 14px; color: #333; }
    .window { height: 825px; border-radius: 5px; box-shadow: 0 0 1px rgba(0, 0, 0, .55), 0 20px 45px rgba(0, 0, 0, .57); }
    .clip { height: 825px; border-radius: 5px; overflow: hidden; background: #fff; }
    .bar { box-sizing: border-box; height: 40px; background: linear-gradient(#ebebeb, #d3d3d3); border-bottom: 1px solid #b1b1b1; box-shadow: inset 0 1px #f6f6f6; display: flex; align-items: flex-start; padding: 9px 0 0 13px; }
    .dot { box-sizing: border-box; width: 12px; height: 12px; border-radius: 50%; margin: 5px 8px 0 0; }
    .red { background: #ff5b57; border: 1px solid #e2443f; }
    .amber { background: #ffbd4a; border: 1px solid #e09e3e; }
    .green { background: #00cd4e; border: 1px solid #14ae46; }
    .btn { height: 22px; background: #fcfcfc; border-radius: 4px; box-shadow: 0 1px #bdbdbd; display: flex; align-items: center; justify-content: center; }
    .back { width: 26px; margin-left: 5px; }
    .fwd { width: 26px; margin-left: 1px; }
    .side { width: 37px; margin-left: 8px; }
    .cloud { width: 37px; margin-left: 8px; }
    .url { width: 590px; margin-left: 197px; position: relative; font-size: 13px; letter-spacing: .09px; color: #666; }
    .url b { font-weight: 400; color: #000; }
    .stop { position: absolute; right: 7px; top: 6px; }
    .share { width: 37px; margin-left: 268px; }
    .tabs { width: 37px; margin-left: 8px; }
    .down { width: 37px; margin-left: 8px; }
    .plus { box-sizing: border-box; margin: 6px 0 0 13px; flex: 1; height: 24px; border: 1px solid #8f8f8f; border-width: 1px 0 0 1px; background: #c4c4c4; display: flex; align-items: center; justify-content: center; }
    .nav { box-sizing: border-box; height: 52px; background: #222; border-bottom: 1px solid #080808; color: #9d9d9d; display: grid; grid-template-columns: 75px 117px 99px 113px 100px 121px 140px 195px 1fr; padding: 0 0 1px 170px; align-items: center; }
    .item { display: flex; align-items: center; gap: 3.500px; white-space: nowrap; line-height: 20px; -webkit-text-stroke: .3px currentColor; }
    .item svg { margin-top: -2px; }
    .caret { width: 0; height: 0; border: 4px solid transparent; border-top-color: currentColor; border-bottom: 0; margin: 2px 0 0 2px; }
    .logo { display: block; }
    .page { padding: 48px 95px 0; }
    .title { margin: 0 0 9px; font-size: 30px; letter-spacing: .3px; line-height: 33px; font-weight: 700; }
    .form { display: grid; grid-template-columns: 610px 610px; column-gap: 30px; row-gap: 15px; }
    .wide { grid-column: 1 / 3; }
    .label { display: block; font-weight: 700; line-height: 20px; margin-bottom: 5px; }
    .input { box-sizing: border-box; display: block; width: 100%; height: 34px; border: 1px solid #ccc; border-radius: 4px; padding: 6px 12px; font: 14px "Liberation Sans", Arial, sans-serif; letter-spacing: .03px; background: #fff; box-shadow: inset 0 1px 1px rgba(0, 0, 0, .075); }
    .input::placeholder { color: #999; opacity: 1; }
    .maprow { margin: 15px 0 16px; }
  `;

  render() {
    return html`
      <div class="window"><div class="clip">
        <div class="bar">
          <div class="dot red"></div><div class="dot amber"></div><div class="dot green"></div>
          <div class="btn back"><svg width="10" height="14" fill="none" stroke="#606060" stroke-width="1.600"><path d="M8 1.500L2.500 7 8 12.500" /></svg></div>
          <div class="btn fwd"><svg width="10" height="14" fill="none" stroke="#d0d0d0" stroke-width="1.400"><path d="M2 1.500L7.500 7 2 12.500" /></svg></div>
          <div class="btn side"><svg width="15" height="12" fill="none" stroke="#6a6a6a"><path d="M.5 .5H14.500V11.500H.5ZM5.500 .5V11.500M2 2.500H4M2 4.500H4M2 6.500H4" /></svg></div>
          <div class="btn cloud"><svg width="20" height="13" fill="none" stroke="#666" stroke-width="1.100"><path d="M4.500 12.300H15.500A3.200 3.200 0 0 0 16.800 6.300 5 5 0 0 0 7.500 3.600 2.600 2.600 0 0 0 4 6.100 3.200 3.200 0 0 0 4.500 12.300Z" /></svg></div>
          <div class="btn url"><span><b>localhost</b>/whatapro/account/add</span><svg class="stop" width="12" height="12" stroke="#777" stroke-width="1.100"><path d="M1 1L11 11M11 1L1 11" /></svg></div>
          <div class="btn share"><svg width="12" height="16" fill="none" stroke="#666"><path d="M4 5.500H1.500V14.500H10.500V5.500H8M6 10V1.500M3.500 4L6 1.300 8.500 4" /></svg></div>
          <div class="btn tabs"><svg width="12" height="12" fill="none" stroke="#666"><path d="M.5 3.500H8.500V11.500H.5ZM3.500 3V.5H11.500V8.500H9" /></svg></div>
          <div class="btn down"><svg width="14" height="14"><circle cx="7" cy="7" r="6.500" fill="#666" /><path fill="#fff" d="M5.800 3.300H8.200V7H10.300L7 10.800 3.700 7H5.800Z" /></svg></div>
          <div class="plus"><svg width="11" height="11" stroke="#777"><path d="M.5 5.500H10.500M5.500 .5V10.500" /></svg></div>
        </div>
        <div class="nav">
          <svg class="logo" width="37" height="37" viewBox="0 0 37 37"><circle cx="18.500" cy="18.500" r="18" fill="#e4e4e4" /><path fill="none" stroke="#1f272b" stroke-width="2" stroke-linejoin="round" stroke-linecap="round" d="M10.500 15L11.300 14.800 13.800 27 18.300 12 22.300 27 26.800 10.500" /></svg>
          ${NAV.map(([i, t]) => html`<div class="item"><svg width="14" height="14" viewBox="0 0 14 14">${ICONS[i]}</svg><span>${t}</span></div>`)}
          <div class="item"><span>nettanawat@gmail.com</span><i class="caret"></i></div>
        </div>
        <div class="page">
          <h1 class="title">New account</h1>
          <div class="form">
            ${FIELDS.map(([l, p, wide]) => html`<div class=${wide ? "wide" : "half"}><label class="label">${l}</label><input class="input" placeholder=${p} /></div>`)}
          </div>
          <div class="maprow"><label class="label">Pin your shop location on the map</label><site-map></site-map></div>
          <div class="form">
            <div><label class="label">Latitude</label><input class="input" /></div>
            <div><label class="label">Longitude</label><input class="input" /></div>
          </div>
        </div>
      </div></div>
    `;
  }
}
